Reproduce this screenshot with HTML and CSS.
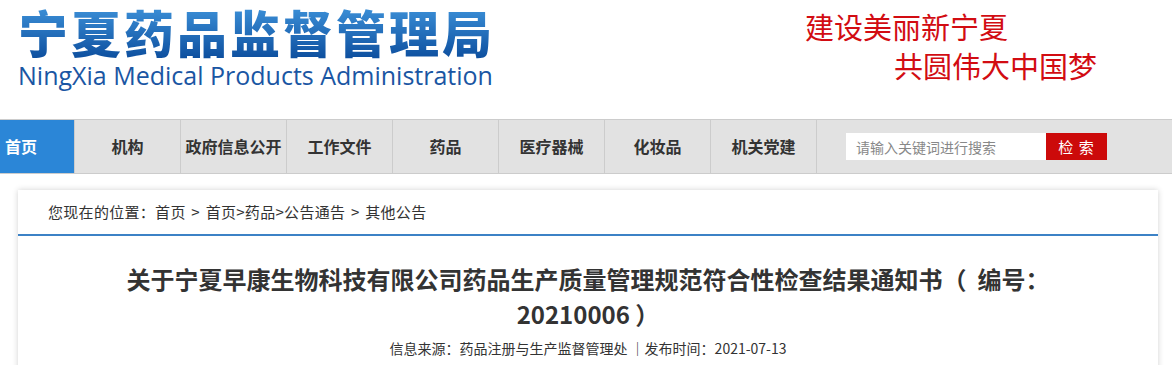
FILE: index.html
```html
<!DOCTYPE html>
<html lang="zh-CN">
<head>
    <meta charset="UTF-8">
    <meta name="viewport" content="width=device-width, initial-scale=1.0">
    <link rel="stylesheet" href="styles.css">
    <title>宁夏药品监督管理局</title>
</head>
<body>
    <div class="header">
        <div class="logo">
            <div class="logo-cn">宁夏药品监督管理局</div>
            <div class="logo-en">NingXia Medical Products Administration</div>
        </div>
        <div class="slogan">
            <div class="slogan-1">建设美丽新宁夏</div>
            <div class="slogan-2">共圆伟大中国梦</div>
        </div>
    </div>

    <div class="nav">
        <a class="nav-item active" href="#">首页</a>
        <a class="nav-item" href="#">机构</a>
        <a class="nav-item" href="#">政府信息公开</a>
        <a class="nav-item" href="#">工作文件</a>
        <a class="nav-item" href="#">药品</a>
        <a class="nav-item" href="#">医疗器械</a>
        <a class="nav-item" href="#">化妆品</a>
        <a class="nav-item" href="#">机关党建</a>
        <div class="search">
            <input type="text" class="search-input" placeholder="请输入关键词进行搜索">
            <button class="search-btn">检 索</button>
        </div>
    </div>

    <div class="content">
        <div class="crumb">您现在的位置：首页 &gt; 首页&gt;药品&gt;公告通告 &gt; 其他公告</div>
        <h1 class="title">关于宁夏早康生物科技有限公司药品生产质量管理规范符合性检查结果通知书（&nbsp; 编号：20210006 ）</h1>
        <div class="meta">信息来源：药品注册与生产监督管理处 ｜发布时间：2021-07-13</div>
    </div>
</body>
</html>
```

FILE: styles.css
```css
body {
  margin: 0;
  padding: 0;
  background: #ffffff;
  font-family: "Noto Sans CJK SC", "Noto Sans", sans-serif;
  color: #333333;
  overflow: hidden;
}

/* header */
.header {
  height: 119px;
  display: flex;
  justify-content: space-between;
}

.logo {
  padding: 0 0 0 18px;
}

.logo-cn {
  font-size: 50px;
  font-weight: 900;
  letter-spacing: 3px;
  line-height: 60px;
  margin-top: 1px;
  background: linear-gradient(#4197de, #0b4c9c);
  -webkit-background-clip: text;
  background-clip: text;
  color: transparent;
}

.logo-en {
  font-family: "Open Sans", sans-serif;
  font-size: 25px;
  line-height: 28px;
  color: #1a56a3;
}

.slogan {
  color: #d20c12;
  font-size: 29px;
  line-height: 36px;
  padding: 8px 75px 0 0;
}

.slogan-1 {
  margin-right: 89px;
}

.slogan-2 {
  margin-top: 3px;
  padding-left: 89px;
}

/* nav */
.nav {
  display: flex;
  align-items: center;
  height: 53px;
  background: #e2e2e2;
  border-top: 1px solid #cccccc;
  border-bottom: 1px solid #cccccc;
}

.nav-item {
  width: 106px;
  height: 53px;
  line-height: 53px;
  text-align: center;
  font-size: 16px;
  font-weight: bold;
  color: #333333;
  text-decoration: none;
  border-left: 1px solid #cccccc;
  box-sizing: border-box;
}

.nav-item.active {
  width: 74px;
  text-align: left;
  padding-left: 5px;
  background: #2b86d7;
  color: #ffffff;
  border-left: none;
}

.search {
  display: flex;
  align-items: center;
  height: 53px;
  padding-left: 29px;
  border-left: 1px solid #cccccc;
}

.search-input {
  width: 200px;
  height: 27px;
  box-sizing: border-box;
  border: none;
  padding: 0 10px;
  font-family: "Noto Sans CJK SC", sans-serif;
  font-size: 14px;
  color: #333333;
  outline: none;
}

.search-input::placeholder {
  color: #888888;
}

.search-btn {
  width: 61px;
  height: 27px;
  border: none;
  background: #cc0a0a;
  color: #ffffff;
  font-family: "Noto Sans CJK SC", sans-serif;
  font-size: 15px;
  padding: 0;
  letter-spacing: 1px;
}

/* content */
.content {
  width: 1140px;
  margin: 16px 0 0 18px;
  box-shadow: 0 0 6px rgba(0, 0, 0, 0.18);
  min-height: 200px;
}

.crumb {
  font-size: 15px;
  line-height: 44px;
  padding-left: 30px;
  letter-spacing: 0.3px;
  word-spacing: 2px;
  border-bottom: 2px solid #3c82c6;
  color: #333333;
}

.title {
  margin: 0;
  padding: 25px 90px 0;
  font-size: 24px;
  line-height: 35px;
  font-weight: bold;
  text-align: center;
  color: #333333;
}

.meta {
  font-size: 14px;
  line-height: 20px;
  text-align: center;
  margin-top: 7px;
  color: #333333;
}
```
